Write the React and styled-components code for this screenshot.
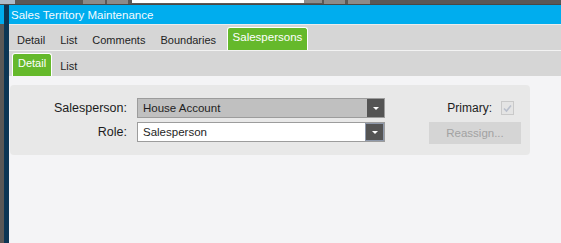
import React from "react"
import styled, { createGlobalStyle } from "styled-components"

const Global = createGlobalStyle`
  html, body {
    margin: 0;
    padding: 0;
    overflow: hidden;
  }
  body {
    font-family: "Liberation Sans", Arial, sans-serif;
    background: #5a5856;
  }
`

export default function App() {
  return (
    <Screen>
      <Global />
      <TopStrip>
        <StripIcon />
        <StripBox w={22} ml={68} />
        <StripBox w={21} ml={2} />
        <StripField />
        <StripFieldEdge />
        <StripBox w={21} ml={2} />
        <StripBox w={22} ml={3} />
      </TopStrip>
      <Body>
        <Gutter>
          <GutterTop />
        </Gutter>
        <Window>
          <TitleBar>Sales Territory Maintenance</TitleBar>
          <TabBar>
            <Tab>Detail</Tab>
            <Tab>List</Tab>
            <Tab>Comments</Tab>
            <Tab>Boundaries</Tab>
            <Tab active>Salespersons</Tab>
          </TabBar>
          <SubTabBar>
            <SubTab active>Detail</SubTab>
            <SubTab>List</SubTab>
          </SubTabBar>
          <Content>
            <Panel>
              <Label>Salesperson:</Label>
              <Select disabled>
                <SelectText>House Account</SelectText>
                <Arrow />
              </Select>
              <CheckRow>
                <span>Primary:</span>
                <CheckBox>
                  <svg width="11" height="11" viewBox="0 0 11 11">
                    <path d="M2 5.5 L4.5 8 L9 2.5" fill="none" stroke="#b9bfcc" strokeWidth="1.6" />
                  </svg>
                </CheckBox>
              </CheckRow>

              <Label>Role:</Label>
              <Select>
                <SelectText>Salesperson</SelectText>
                <Arrow focus />
              </Select>
              <Button disabled>Reassign...</Button>
            </Panel>
          </Content>
        </Window>
      </Body>
    </Screen>
  )
}

const Screen = styled.div`
  width: 561px;
  height: 243px;
  display: flex;
  flex-direction: column;
  background: #5a5856;
`

const TopStrip = styled.div`
  height: 5px;
  display: flex;
  align-items: flex-start;
  background: #5a5856;
  border-bottom: 1px solid #4a4846;
  box-sizing: border-box;
`

const StripIcon = styled.div`
  width: 15px;
  height: 4px;
  background: #aebbc8;
`

const StripBox = styled.div`
  width: ${p => p.w}px;
  height: 4px;
  margin-left: ${p => p.ml}px;
  background: #8c8a88;
`

const StripField = styled.div`
  width: 172px;
  height: 3px;
  margin-left: 4px;
  background: #ffffff;
`

const StripFieldEdge = styled.div`
  width: 18px;
  height: 3px;
  background: #8f8d8b;
`

const Body = styled.div`
  flex: 1;
  display: flex;
`

const Gutter = styled.div`
  width: 4px;
  background: #5a5856;
`

const GutterTop = styled.div`
  height: 19px;
  background: #00adee;
`

const Window = styled.div`
  flex: 1;
  display: flex;
  flex-direction: column;
  border-left: 5px solid #0c3654;
  background: #f4f4f6;
`

const TitleBar = styled.div`
  height: 19px;
  line-height: 20px;
  padding-left: 2px;
  background: #00adee;
  color: #f4fbff;
  font-size: 11.5px;
`

const TabBar = styled.div`
  height: 26px;
  box-sizing: border-box;
  display: flex;
  align-items: flex-end;
  padding-left: 0.5px;
  border-top: 1px solid #ececec;
  background: #d6d6d6;
`

const Tab = styled.div`
  height: 23px;
  box-sizing: border-box;
  padding: ${p => (p.active ? "0 5px 2px" : "3px 7.5px 0")};
  margin-left: ${p => (p.active ? "3px" : "0")};
  line-height: ${p => (p.active ? "19px" : "20px")};
  font-size: ${p => (p.active ? "11.5px" : "11px")};
  color: ${p => (p.active ? "#ffffff" : "#1e1e1e")};
  background: ${p => (p.active ? "#65b92b" : "transparent")};
  border: ${p => (p.active ? "1px solid #ffffff" : "none")};
  border-bottom: none;
  border-radius: 3px 3px 0 0;
`

const SubTabBar = styled(TabBar)`
  height: 26px;
  padding-left: 3px;
  border-top: 1px solid #f3f3f3;
`

const SubTab = styled(Tab)`
  padding: ${p => (p.active ? "0 5px 2px" : "3px 8px 0")};
  margin-left: 0;
  font-size: 11px;
`

const Content = styled.div`
  flex: 1;
  padding: 9px 0 0 1px;
`

const Panel = styled.div`
  width: 520px;
  box-sizing: border-box;
  padding: 13px 9px 11px 0;
  display: grid;
  grid-template-columns: 127px 292px 92px;
  grid-template-rows: 20px 22px;
  row-gap: 4px;
  background: #e8e8e8;
  border-radius: 4px;
`

const Label = styled.div`
  padding-right: 10px;
  text-align: right;
  font-size: 12.5px;
  line-height: 20px;
  color: #1c1c1c;
`

const Select = styled.div`
  width: 248px;
  height: 20px;
  box-sizing: border-box;
  display: flex;
  border: 1px solid #9c9c9c;
  background: ${p => (p.disabled ? "#c0c0c0" : "#ffffff")};
`

const SelectText = styled.div`
  flex: 1;
  padding-left: 5px;
  font-size: 11.5px;
  line-height: 18px;
  color: #1e1e1e;
`

const Arrow = styled.div`
  width: 17px;
  height: ${p => (p.focus ? "16px" : "18px")};
  box-sizing: content-box;
  border: ${p => (p.focus ? "1px solid #8e98aa" : "none")};
  background: #545454;
  display: flex;
  align-items: center;
  justify-content: center;
  &::after {
    content: "";
    border-left: 3px solid transparent;
    border-right: 3px solid transparent;
    border-top: 3px solid #ffffff;
  }
`

const CheckRow = styled.div`
  display: flex;
  align-items: center;
  justify-content: flex-end;
  gap: 9px;
  padding-right: 7px;
  font-size: 12px;
  color: #1c1c1c;
`

const CheckBox = styled.div`
  width: 13px;
  height: 14px;
  box-sizing: border-box;
  border: 1px solid #c9c9c9;
  background: #e4e4e4;
  display: flex;
  align-items: center;
  justify-content: center;
`

const Button = styled.div`
  height: 22px;
  line-height: 22px;
  text-align: center;
  font-size: 11.5px;
  color: #a2a2a2;
  background: #d5d5d5;
`
